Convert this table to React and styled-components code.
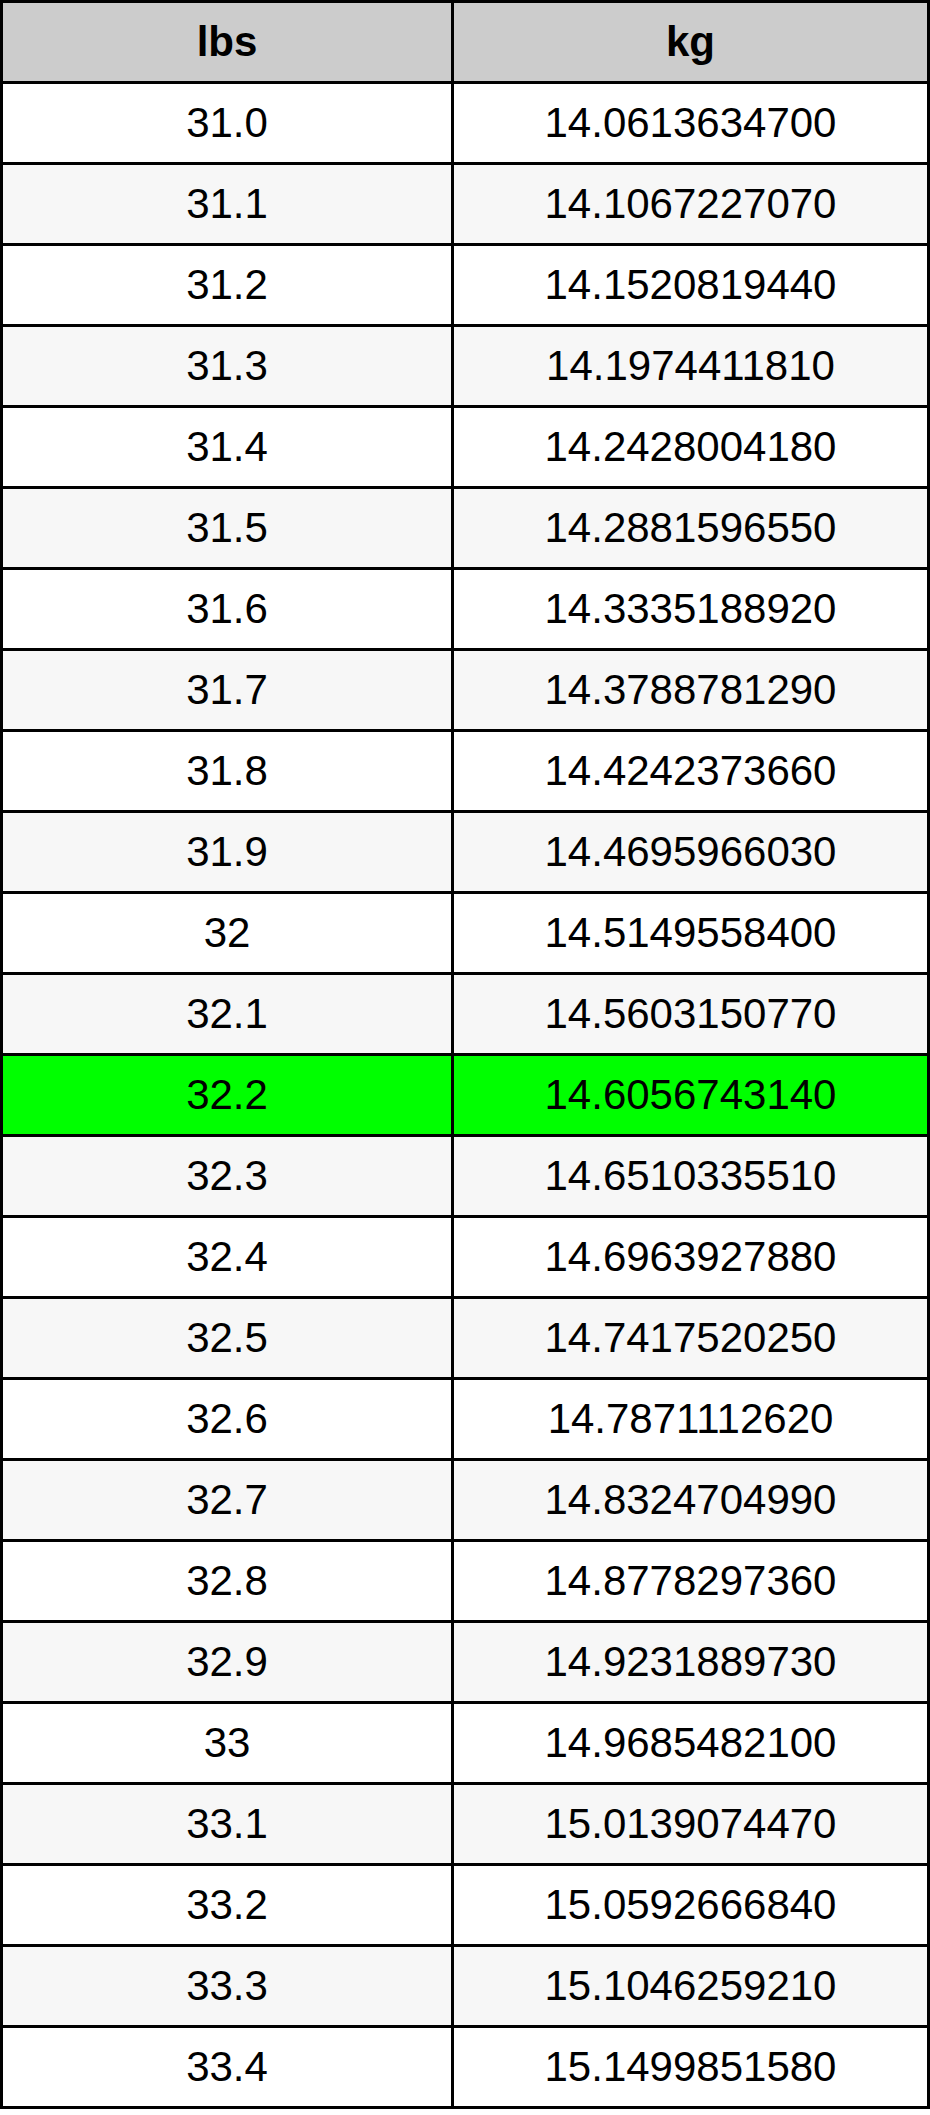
import React from 'react'
import styled, { createGlobalStyle } from 'styled-components'

const GlobalStyle = createGlobalStyle`
  html,
  body {
    margin: 0;
    padding: 0;
    background: #ffffff;
  }

  body {
    font-family: 'Liberation Sans', Arial, sans-serif;
    color: #000000;
  }
`

const Table = styled.div`
  display: grid;
  grid-template-columns: 448px 473px;
  grid-auto-rows: 78px;
  gap: 3px;
  padding: 3px;
  width: 930px;
  box-sizing: border-box;
  background: #000000;
`

const Cell = styled.div`
  display: flex;
  align-items: center;
  justify-content: center;
  font-size: 42px;
  font-weight: ${(props) => (props.head ? 700 : 400)};
  background: ${(props) =>
    props.head
      ? '#cccccc'
      : props.active
        ? '#00ff00'
        : props.odd
          ? '#f7f7f7'
          : '#ffffff'};
`

const rows = [
  ['31.0', '14.0613634700'],
  ['31.1', '14.1067227070'],
  ['31.2', '14.1520819440'],
  ['31.3', '14.1974411810'],
  ['31.4', '14.2428004180'],
  ['31.5', '14.2881596550'],
  ['31.6', '14.3335188920'],
  ['31.7', '14.3788781290'],
  ['31.8', '14.4242373660'],
  ['31.9', '14.4695966030'],
  ['32', '14.5149558400'],
  ['32.1', '14.5603150770'],
  ['32.2', '14.6056743140'],
  ['32.3', '14.6510335510'],
  ['32.4', '14.6963927880'],
  ['32.5', '14.7417520250'],
  ['32.6', '14.7871112620'],
  ['32.7', '14.8324704990'],
  ['32.8', '14.8778297360'],
  ['32.9', '14.9231889730'],
  ['33', '14.9685482100'],
  ['33.1', '15.0139074470'],
  ['33.2', '15.0592666840'],
  ['33.3', '15.1046259210'],
  ['33.4', '15.1499851580']
]

const App = () => {
  return (
    <>
      <GlobalStyle />
      <Table>
        <Cell head>lbs</Cell>
        <Cell head>kg</Cell>
        {rows.map(([lbs, kg], i) => {
          const active = lbs === '32.2'
          const odd = i % 2 === 1
          return (
            <React.Fragment key={lbs}>
              <Cell active={active} odd={odd}>{lbs}</Cell>
              <Cell active={active} odd={odd}>{kg}</Cell>
            </React.Fragment>
          )
        })}
      </Table>
    </>
  )
}

export default App
